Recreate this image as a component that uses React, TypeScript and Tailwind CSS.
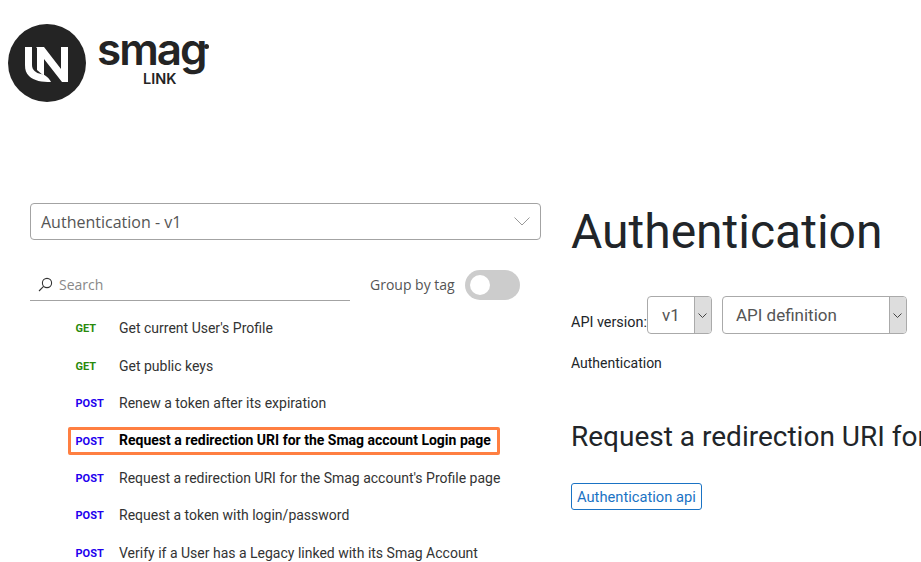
const endpoints = [
  { method: 'GET', label: "Get current User's Profile" },
  { method: 'GET', label: 'Get public keys' },
  { method: 'POST', label: 'Renew a token after its expiration' },
  { method: 'POST', label: 'Request a redirection URI for the Smag account Login page', active: true },
  { method: 'POST', label: "Request a redirection URI for the Smag account's Profile page" },
  { method: 'POST', label: 'Request a token with login/password' },
  { method: 'POST', label: 'Verify if a User has a Legacy linked with its Smag Account' },
];

function Logo() {
  return (
    <div className="flex items-start pl-2 pt-6 h-[126px]">
      <svg width="78" height="78" viewBox="0 0 78 78">
        <circle cx="39" cy="39" r="39" fill="#242424" />
        <path d="M17 23H24V41C24 46 28 49 33 50C38 51 41 54 43 58C34 58 26 57 21 52C18 49 17 46 17 41Z" fill="#fff" />
        <path d="M28 23H36L53 45V23H60V58H54L36 35V52L29 46V24Z" fill="#fff" />
      </svg>
      <div className="relative ml-3 w-[112px] h-[78px]">
        <span className="absolute left-[-1px] top-[3px] font-['Inter',sans-serif] text-[44px] leading-[44px] font-semibold tracking-[-2px] text-[#242424]">smag</span>
        <span className="absolute left-[106px] top-[20px] w-[5px] h-[5px] rounded-full bg-[#242424]" />
        <span className="absolute left-[45px] top-[46px] font-['Inter',sans-serif] text-[14.5px] leading-[18px] font-semibold text-[#242424]">LINK</span>
      </div>
    </div>
  );
}

function Sidebar() {
  return (
    <div className="w-[511px] shrink-0 font-['Open_Sans',sans-serif]">
      <div className="flex items-center justify-between h-[37px] rounded border border-[#a3a3a3] pl-[10px] pr-[10px] text-[16px] text-[#555]">
        <span>Authentication - v1</span>
        <svg width="16" height="9" viewBox="0 0 16 9" fill="none" stroke="#999" strokeWidth="1">
          <path d="M0.5 0.5L8 8L15.5 0.5" />
        </svg>
      </div>
      <div className="flex items-center mt-[30px]">
        <div className="flex items-center w-[320px] h-[31px] border-b border-[#a3a3a3] pl-2 pb-[2px]">
          <svg width="15" height="15" viewBox="0 0 15 15" fill="none" stroke="#333" strokeWidth="1.1">
            <circle cx="9" cy="6" r="4.6" />
            <path d="M5.6 9.4L1 14" />
          </svg>
          <span className="ml-[6px] text-[14px] text-[#888]">Search</span>
        </div>
        <span className="ml-5 -mt-[2px] text-[14px] text-[#555]">Group by tag</span>
        <div className="ml-[10px] -mt-[1px] flex items-center w-[55px] h-[30px] rounded-full bg-[#ccc] pl-[5px]">
          <div className="w-[20px] h-[20px] rounded-full bg-white" />
        </div>
      </div>
      <div className="mt-[9px] flex flex-col font-['Roboto',sans-serif] ml-[38px]">
        {endpoints.map((e) => (
          <div
            key={e.label}
            className={`flex items-center h-[37.4px] text-[14px] text-[#333] ${e.active ? 'relative' : ''}`}
          >
            {e.active && (
              <div className="absolute left-0 top-[5px] w-[432px] h-[28px] border-[3px] border-[#ff7f41] rounded-[2px]" />
            )}
            <span
              className={`w-[51px] pl-[7.5px] pt-[2px] text-[11px] font-bold ${e.method === 'GET' ? 'text-[#2a8a0c]' : 'text-[#2200ee]'}`}
            >
              {e.method}
            </span>
            <span className={e.active ? 'font-bold text-black' : ''}>{e.label}</span>
          </div>
        ))}
      </div>
    </div>
  );
}

function Content() {
  return (
    <div className="ml-[30px] w-[400px] shrink-0 font-['Roboto',sans-serif] text-[#212529]">
      <h1 className="font-normal text-[48px] leading-[58px]">Authentication</h1>
      <div className="flex items-start mt-[35px]">
        <span className="text-[14.4px] mt-[16px]">API version:</span>
        <div className="flex items-stretch w-[65px] h-[38px] rounded border border-[#aaa] overflow-hidden text-[17px] text-[#555]">
          <span className="flex-1 pl-[14px] leading-[36px]">v1</span>
          <span className="flex items-center justify-center w-[17px] bg-[#ddd] border-l border-[#aaa]">
            <svg width="9" height="5" viewBox="0 0 9 5" fill="none" stroke="#444" strokeWidth="1">
              <path d="M0.5 0.5L4.5 4.5L8.5 0.5" />
            </svg>
          </span>
        </div>
        <div className="flex items-stretch ml-[10px] w-[185px] h-[38px] rounded border border-[#aaa] overflow-hidden text-[17px] text-[#555]">
          <span className="flex-1 pl-[13px] leading-[36px]">API definition</span>
          <span className="flex items-center justify-center w-[17px] bg-[#ddd] border-l border-[#aaa]">
            <svg width="9" height="5" viewBox="0 0 9 5" fill="none" stroke="#444" strokeWidth="1">
              <path d="M0.5 0.5L4.5 4.5L8.5 0.5" />
            </svg>
          </span>
        </div>
      </div>
      <p className="text-[14px] leading-[20px] mt-[19px]">Authentication</p>
      <h2 className="font-normal text-[28px] leading-[34px] mt-[47px] whitespace-nowrap">Request a redirection URI for the Smag account Login page</h2>
      <span className="inline-block mt-[29px] h-[27px] px-[5px] border border-[#1a73c4] rounded-[3px] text-[14.7px] leading-[27px] text-[#1a73c4]">Authentication api</span>
    </div>
  );
}

export default function App() {
  return (
    <div className="w-[921px] h-[562px] overflow-hidden bg-white">
      <Logo />
      <div className="flex mt-[77px] pl-[30px]">
        <Sidebar />
        <Content />
      </div>
    </div>
  );
}
